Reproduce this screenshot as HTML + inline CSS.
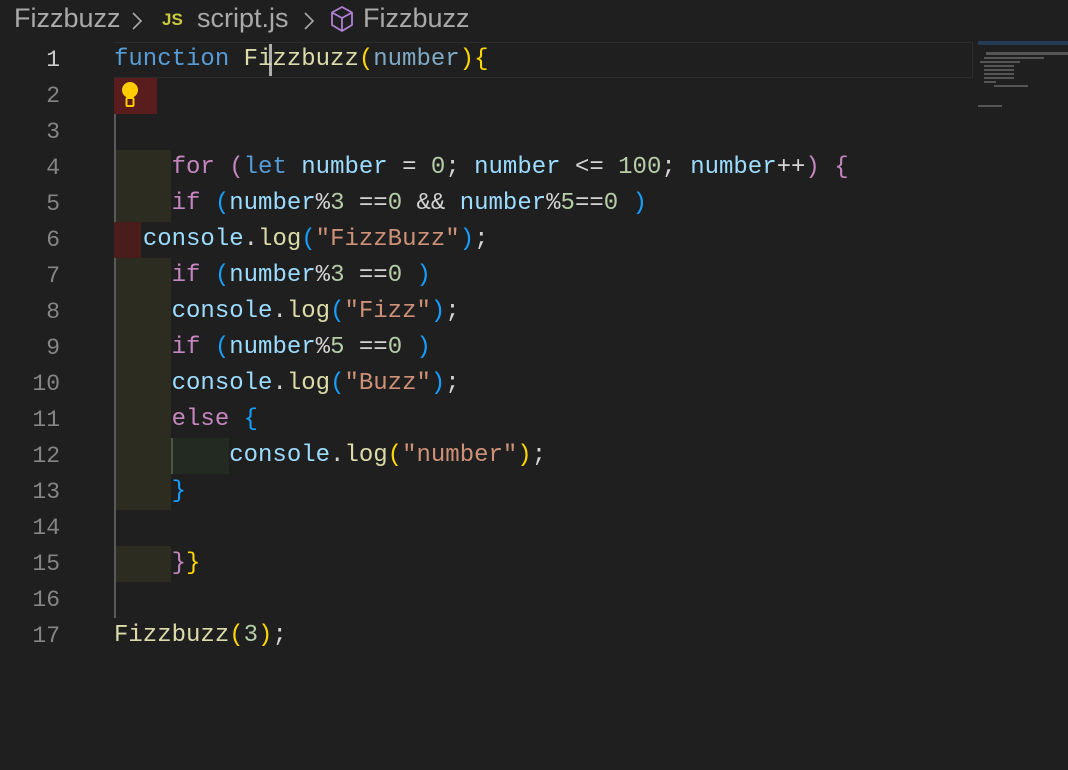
<!DOCTYPE html>
<html><head><style>
body{margin:0;width:1068px;height:770px;background:#1f1f1f;overflow:hidden;position:relative;font-family:"Liberation Mono",monospace;}
.bc{position:absolute;top:3px;font-family:"Liberation Sans",sans-serif;font-size:27px;color:#a9a9a9;white-space:nowrap;}
.ln{position:absolute;left:0;width:60px;text-align:right;font-size:23px;color:#858585;line-height:36px;}
.code{position:absolute;left:114px;font-size:24px;line-height:36px;white-space:pre;color:#d4d4d4;}
.b{position:absolute;}
.k{color:#569cd6}.f{color:#dcdcaa}.p{color:#9cdcfe}.y{color:#ffd700}.c{color:#c586c0}.bl{color:#179fff}.n{color:#b5cea8}.s{color:#ce9178}.pa{color:#7fa9c4}
</style></head><body>
<div class="bc" style="left:14px">Fizzbuzz</div>
<svg class="b" style="left:131px;top:11px" width="12" height="20" viewBox="0 0 12 20"><path d="M2 2 L10 10 L2 18" fill="none" stroke="#a9a9a9" stroke-width="1.6"/></svg>
<div class="bc" style="left:162px;top:10px;color:#cbcb41;font-weight:bold;font-size:17px;">JS</div>
<div class="bc" style="left:197px">script.js</div>
<svg class="b" style="left:303px;top:11px" width="12" height="20" viewBox="0 0 12 20"><path d="M2 2 L10 10 L2 18" fill="none" stroke="#a9a9a9" stroke-width="1.6"/></svg>
<svg class="b" style="left:329px;top:5px" width="26" height="28" viewBox="0 0 26 28"><path d="M13 2 L23 7.5 V20 L13 26 L3 20 V7.5 Z M3 7.5 L13 13 L23 7.5 M13 13 V26" fill="none" stroke="#b180d7" stroke-width="1.8" stroke-linejoin="round"/></svg>
<div class="bc" style="left:363px">Fizzbuzz</div>
<div class="b" style="left:114px;top:42px;width:858px;height:34px;border:1px solid #2c2c2c;border-left:none"></div>
<div class="b" style="left:114px;top:78px;width:2px;height:540px;background:#5a5a5a"></div>
<div class="b" style="left:114px;top:78px;width:43px;height:36px;background:#5a1d1d"></div>
<div class="b" style="left:116px;top:150px;width:55px;height:72px;background:#2c2c21"></div>
<div class="b" style="left:116px;top:258px;width:55px;height:252px;background:#2c2c21"></div>
<div class="b" style="left:114px;top:222px;width:27px;height:36px;background:#4b1c1c"></div>
<div class="b" style="left:171px;top:438px;width:58px;height:36px;background:#232a22;border-left:2px solid #4a554a;box-sizing:border-box"></div>
<div class="b" style="left:116px;top:546px;width:55px;height:36px;background:#2c2c21"></div>
<div class="b" style="left:269px;top:44px;width:3px;height:32px;background:#aeafad"></div>
<svg class="b" style="left:119px;top:81px" width="22" height="28" viewBox="0 0 22 28"><circle cx="11" cy="9" r="8" fill="#ffcc00"/><path d="M7 14 L8 18 H14 L15 14 Z" fill="#ffcc00"/><rect x="7.5" y="17" width="7" height="8" rx="1" fill="none" stroke="#ffcc00" stroke-width="2"/></svg>
<div class="ln" style="top:42px"><span style="color:#ccc">1</span><br>2<br>3<br>4<br>5<br>6<br>7<br>8<br>9<br>10<br>11<br>12<br>13<br>14<br>15<br>16<br>17</div>
<div class="code" style="top:42px"><span class="k">function</span> <span class="f">Fizzbuzz</span><span class="y">(</span><span class="pa">number</span><span class="y">){</span>


    <span class="c">for</span> <span class="c">(</span><span class="k">let</span> <span class="p">number</span> = <span class="n">0</span>; <span class="p">number</span> &lt;= <span class="n">100</span>; <span class="p">number</span>++<span class="c">)</span> <span class="c">{</span>
    <span class="c">if</span> <span class="bl">(</span><span class="p">number</span>%<span class="n">3</span> ==<span class="n">0</span> &amp;&amp; <span class="p">number</span>%<span class="n">5</span>==<span class="n">0</span> <span class="bl">)</span>
  <span class="p">console</span>.<span class="f">log</span><span class="bl">(</span><span class="s">"FizzBuzz"</span><span class="bl">)</span>;
    <span class="c">if</span> <span class="bl">(</span><span class="p">number</span>%<span class="n">3</span> ==<span class="n">0</span> <span class="bl">)</span>
    <span class="p">console</span>.<span class="f">log</span><span class="bl">(</span><span class="s">"Fizz"</span><span class="bl">)</span>;
    <span class="c">if</span> <span class="bl">(</span><span class="p">number</span>%<span class="n">5</span> ==<span class="n">0</span> <span class="bl">)</span>
    <span class="p">console</span>.<span class="f">log</span><span class="bl">(</span><span class="s">"Buzz"</span><span class="bl">)</span>;
    <span class="c">else</span> <span class="bl">{</span>
        <span class="p">console</span>.<span class="f">log</span><span class="y">(</span><span class="s">"number"</span><span class="y">)</span>;
    <span class="bl">}</span>

    <span class="c">}</span><span class="y">}</span>

<span class="f">Fizzbuzz</span><span class="y">(</span><span class="n">3</span><span class="y">)</span>;</div>
<div class="b" style="left:978px;top:41px;width:90px;height:4px;background:#264f78;opacity:.6"></div>
<div class="b" style="left:986px;top:52px;width:82px;height:3px;background:#555"></div>
<div class="b" style="left:984px;top:57px;width:60px;height:2px;background:#555"></div>
<div class="b" style="left:980px;top:61px;width:40px;height:2px;background:#555"></div>
<div class="b" style="left:984px;top:65px;width:30px;height:2px;background:#555"></div>
<div class="b" style="left:984px;top:69px;width:30px;height:2px;background:#555"></div>
<div class="b" style="left:984px;top:73px;width:30px;height:2px;background:#555"></div>
<div class="b" style="left:984px;top:77px;width:30px;height:2px;background:#555"></div>
<div class="b" style="left:984px;top:81px;width:12px;height:2px;background:#555"></div>
<div class="b" style="left:994px;top:85px;width:34px;height:2px;background:#555"></div>
<div class="b" style="left:978px;top:105px;width:24px;height:2px;background:#555"></div>
</body></html>
